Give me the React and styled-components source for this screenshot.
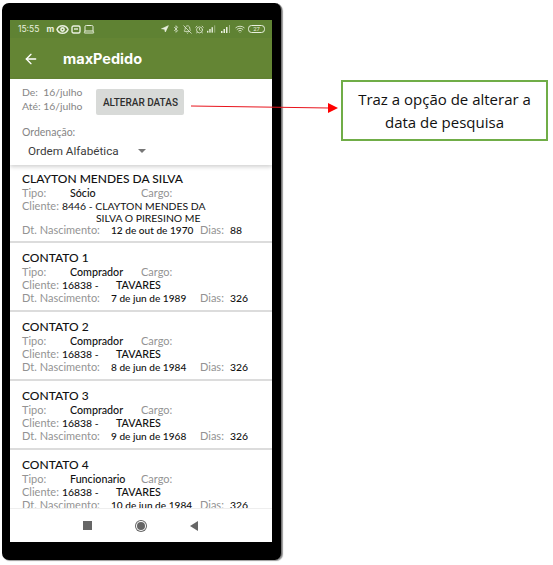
import React from 'react';
import styled, { createGlobalStyle } from 'styled-components';
import { ArrowLeft, Eye, Laptop, Navigation, Bluetooth, BellOff, AlarmClock, Wifi } from 'lucide-react';

const GlobalStyle = createGlobalStyle`
  html, body { margin: 0; padding: 0; background: #fff; }
  body { font-family: "Inter", "Liberation Sans", sans-serif; }
`;

const Page = styled.div`
  position: relative;
  width: 553px;
  height: 565px;
  display: flex;
  align-items: flex-start;
  padding: 3px 0 0 2px;
  box-sizing: border-box;
  overflow: hidden;
`;

const Phone = styled.div`
  width: 280px;
  height: 557px;
  flex: none;
  box-sizing: border-box;
  padding: 17px 9px 18px 8px;
  background: #000;
  border-radius: 7px;
  border-right: 1px solid #777;
  box-shadow: 1px 1px 1px #999;
`;

const Screen = styled.div`
  height: 100%;
  background: #fff;
  display: flex;
  flex-direction: column;
  overflow: hidden;
`;

const StatusBar = styled.div`
  height: 18px;
  flex: none;
  background: #5f8233;
  color: #e9f0df;
  display: flex;
  align-items: center;
  justify-content: space-between;
  padding: 0 6px 0 8px;
  font-size: 8.5px;
`;

const StatusGroup = styled.div`
  display: flex;
  align-items: center;
  gap: ${p => p.$gap}px;
`;

const StatusTime = styled.span`
  margin-right: 5px;
`;

const AppBar = styled.div`
  height: 41px;
  flex: none;
  background: #648534;
  color: #fff;
  display: flex;
  align-items: center;
  padding-left: 13px;
  gap: 24px;
`;

const AppTitle = styled.div`
  font-family: "Inter", sans-serif;
  font-size: 14.5px;
  font-weight: 700;
`;

const Filters = styled.div`
  flex: none;
  height: 86px;
  box-sizing: border-box;
  padding: 5px 12px 0 12px;
  box-shadow: 0 2px 4px rgba(0,0,0,.18);
  position: relative;
`;

const DateRow = styled.div`
  display: flex;
  align-items: center;
  gap: 14px;
`;

const DateText = styled.div`
  color: #858585;
  font-family: "Lato", sans-serif;
  font-size: 10.4px;
  line-height: 13.5px;
`;

const DateButton = styled.div`
  width: 88px;
  height: 26px;
  margin-top: 5px;
  border-radius: 2px;
  background: #d8dad8;
  color: #2e2e2e;
  font-family: "Roboto", sans-serif;
  font-size: 10px;
  font-weight: 500;
  display: flex;
  align-items: center;
  justify-content: center;
`;

const SortLabel = styled.div`
  color: #858585;
  font-family: "Lato", sans-serif;
  font-size: 10.5px;
  margin-top: 11px;
`;

const SortSelect = styled.div`
  display: flex;
  align-items: center;
  gap: 19px;
  margin: 6px 0 0 6px;
  color: #3c3c3c;
  font-family: "Roboto", sans-serif;
  font-size: 11.7px;
`;

const Caret = styled.span`
  width: 0;
  height: 0;
  border-left: 4px solid transparent;
  border-right: 4px solid transparent;
  border-top: 4px solid #777;
`;

const List = styled.div`
  flex: 1;
  min-height: 0;
  overflow: hidden;
`;

const Card = styled.div`
  box-sizing: border-box;
  height: ${p => p.$tall ? 78 : 69}px;
  padding: ${p => p.$tall ? 7 : 8}px 12px 0 12px;
  border-bottom: 2px solid #dcdcdc;
  font-family: "Lato", sans-serif;
  font-size: 10.4px;
  color: #111;
`;

const CardTitle = styled.div`
  font-family: "Lato", sans-serif;
  font-size: 12px;
  font-weight: 500;
  line-height: 14px;
  color: #111;
`;

const Line = styled.div`
  display: flex;
  align-items: baseline;
  height: 13px;
  line-height: 13px;
`;

const ClientLine = styled.div`
  display: flex;
  align-items: baseline;
  box-sizing: border-box;
  height: 24px;
  padding-top: 1px;
  line-height: 12px;
`;

const Label = styled.span`
  color: #939393;
  font-size: 11px;
  width: ${p => p.$w ? p.$w + 'px' : 'auto'};
  margin-right: ${p => p.$mr || 0}px;
  flex: none;
`;

const Value = styled.span`
  width: ${p => p.$w ? p.$w + 'px' : 'auto'};
  font-size: ${p => p.$size || 10.4}px;
  flex: none;
  font-weight: 500;
`;

const ClientName = styled.span`
  display: block;
  margin-left: ${p => p.$ml || 0}px;
`;

const NavBar = styled.div`
  height: 34px;
  flex: none;
  background: #fff;
  border-top: 1px solid #eee;
  display: flex;
  align-items: center;
  box-sizing: border-box;
  padding-left: 73px;
  gap: 45px;
`;

const NavSquare = styled.span`
  width: 9px;
  height: 9px;
  background: #666;
`;

const NavCircle = styled.span`
  width: 8px;
  height: 8px;
  border-radius: 50%;
  background: #666;
  box-shadow: 0 0 0 1px #fff, 0 0 0 2px #666;
`;

const NavBack = styled.span`
  width: 0;
  height: 0;
  border-top: 5px solid transparent;
  border-bottom: 5px solid transparent;
  border-right: 8px solid #666;
`;

const Callout = styled.div`
  box-sizing: border-box;
  width: 207px;
  height: 61px;
  margin: 77px 0 0 59px;
  flex: none;
  border: 2px solid #70ad47;
  background: #fff;
  font-family: "Open Sans", sans-serif;
  font-size: 15px;
  line-height: 23px;
  color: #111;
  text-align: center;
  display: flex;
  align-items: center;
  justify-content: center;
`;

const Arrow = styled.svg`
  position: absolute;
  left: 190px;
  top: 100px;
`;

const contacts = [
  { name: 'CONTATO 1', tipo: 'Comprador', birth: '7 de jun de 1989' },
  { name: 'CONTATO 2', tipo: 'Comprador', birth: '8 de jun de 1984' },
  { name: 'CONTATO 3', tipo: 'Comprador', birth: '9 de jun de 1968' },
  { name: 'CONTATO 4', tipo: 'Funcionario', birth: '10 de jun de 1984' },
];

const Signal = ({ w }) => (
  <svg width={w} height="8" viewBox="0 0 11 8" fill="#e9f0df">
    <rect x="0" y="6" width="1.5" height="2" />
    <rect x="2.5" y="4" width="1.5" height="4" />
    <rect x="5" y="2" width="1.5" height="6" />
    <rect x="8" y="0" width="1" height="8" opacity=".5" />
  </svg>
);

const App = () => (
  <>
    <GlobalStyle />
    <Page>
      <Phone>
        <Screen>
          <StatusBar>
            <StatusGroup $gap={2}>
              <StatusTime>15:55</StatusTime>
              <b>m</b>
              <Eye size={13} strokeWidth={3} />
              <svg width="10" height="9" viewBox="0 0 10 9" fill="none" stroke="#e9f0df" strokeWidth="1.4">
                <rect x="1" y="1" width="8" height="7" rx="1.5" />
                <path d="M3 4h4" />
              </svg>
              <Laptop size={12} />
            </StatusGroup>
            <StatusGroup $gap={3.2}>
              <Navigation size={8} fill="#e9f0df" />
              <Bluetooth size={8} />
              <BellOff size={9} />
              <AlarmClock size={9} />
              <Signal w={10} />
              <Signal w={11} />
              <Wifi size={10} />
              <svg width="18" height="8" viewBox="0 0 18 8">
                <rect x=".5" y=".5" width="16" height="7" rx="3" fill="none" stroke="#e9f0df" />
                <text x="8.5" y="6.3" fontSize="6" fill="#e9f0df" textAnchor="middle" fontFamily="Roboto">27</text>
              </svg>
            </StatusGroup>
          </StatusBar>
          <AppBar>
            <ArrowLeft size={16} strokeWidth={2} />
            <AppTitle>maxPedido</AppTitle>
          </AppBar>
          <Filters>
            <DateRow>
              <DateText>De:&nbsp; 16/julho<br />Até: 16/julho</DateText>
              <DateButton>ALTERAR DATAS</DateButton>
            </DateRow>
            <SortLabel>Ordenação:</SortLabel>
            <SortSelect>Ordem Alfabética <Caret /></SortSelect>
          </Filters>
          <List>
            <Card $tall>
              <CardTitle>CLAYTON MENDES DA SILVA</CardTitle>
              <Line><Label $w={48}>Tipo:</Label><Value $size={10.7} $w={71}>Sócio</Value><Label>Cargo:</Label></Line>
              <ClientLine>
                <Label $mr={3}>Cliente:</Label>
                <div>
                  <ClientName>8446 - CLAYTON MENDES DA</ClientName>
                  <ClientName $ml={34}>SILVA O PIRESINO ME</ClientName>
                </div>
              </ClientLine>
              <Line><Label $w={89}>Dt. Nascimento:</Label><Value $size={10.1} $w={89}>12 de out de 1970</Value><Label $w={30}>Dias:</Label><Value>88</Value></Line>
            </Card>
            {contacts.map(c => (
              <Card key={c.name}>
                <CardTitle>{c.name}</CardTitle>
                <Line><Label $w={48}>Tipo:</Label><Value $size={10.7} $w={71}>{c.tipo}</Value><Label>Cargo:</Label></Line>
                <Line><Label $mr={3}>Cliente:</Label><Value $w={54}>16838 -</Value><Value $size={10.7}>TAVARES</Value></Line>
                <Line><Label $w={89}>Dt. Nascimento:</Label><Value $size={10.1} $w={89}>{c.birth}</Value><Label $w={30}>Dias:</Label><Value>326</Value></Line>
              </Card>
            ))}
          </List>
          <NavBar>
            <NavSquare />
            <NavCircle />
            <NavBack />
          </NavBar>
        </Screen>
      </Phone>
      <Callout>Traz a opção de alterar a<br />data de pesquisa</Callout>
      <Arrow width="150" height="16" viewBox="0 0 150 16">
        <line x1="1" y1="6" x2="139" y2="8" stroke="#e8141c" strokeWidth="1" />
        <polygon points="138,3 148,8 138,13" fill="#f00" />
      </Arrow>
    </Page>
  </>
);

export default App;
